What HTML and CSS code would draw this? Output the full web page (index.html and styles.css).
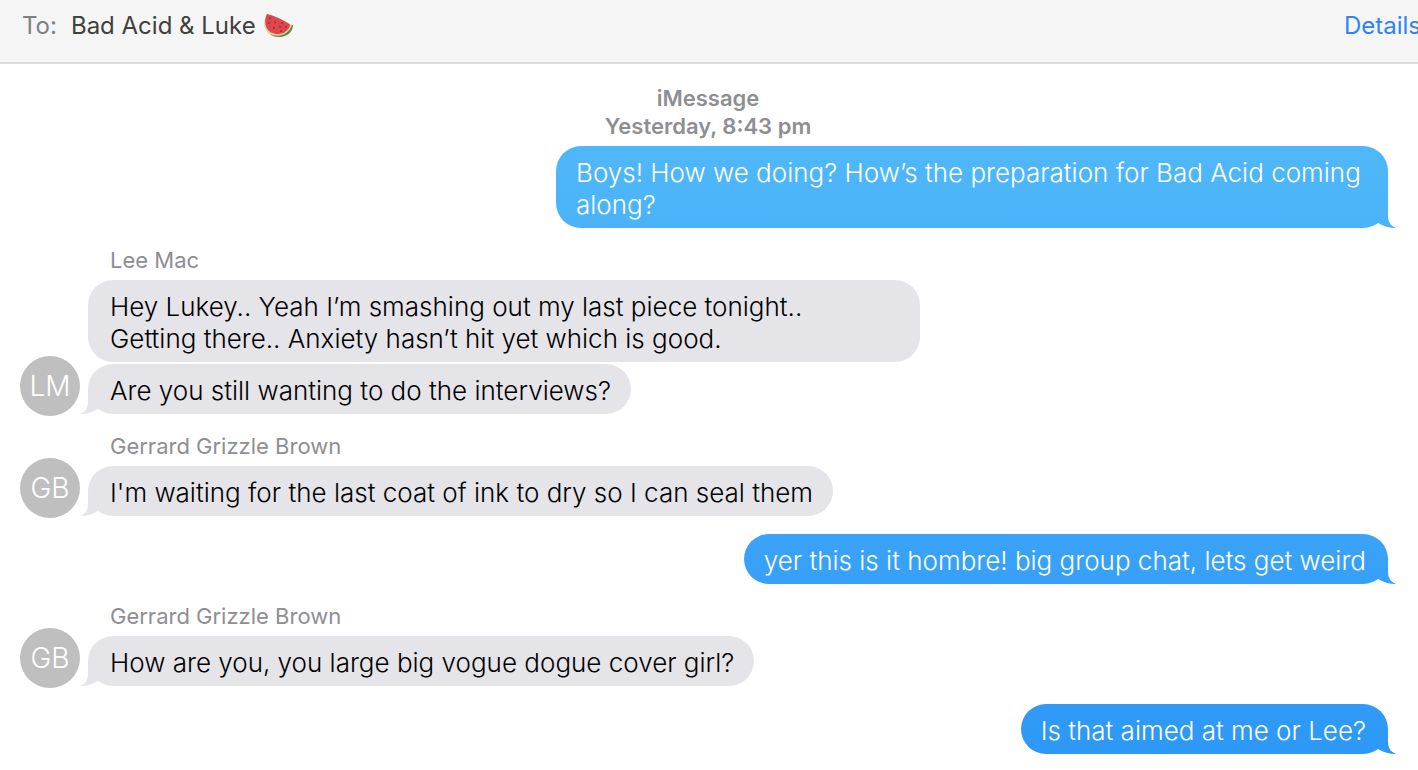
FILE: index.html
```
<!DOCTYPE html>
<html lang="en">
<head>
    <meta charset="utf-8">
    <title>Bad Acid &amp; Luke</title>
    <meta name="viewport" content="width=device-width, initial-scale=1.0">
    <link rel="stylesheet" href="styles.css">
</head>
<body>
    <header class="chat-header">
        <span class="to-label">To:</span>
        <h1 class="chat-name">Bad Acid &amp; Luke</h1>
        <svg class="melon" viewBox="0 0 30 26" role="img" aria-label="watermelon">
            <path d="M3 1 C-1 7 -1 15 4 20 C10 25 19 25 24 21 C28 18 29 15 29 12Z" fill="#ddd3a8"/>
            <path d="M29 12 C29 19 23 24 15 24 C11 24 8 23 5 20.500 C11 24 18 23 22 20 C25 18 27 15 28 12Z" fill="#5d8b35"/>
            <path d="M3 1 C0 7 1 14 5 18 C10 22 17 22 21 19 C24 17 26 14 26 11.500 Q15 4 3 1Z" fill="#e0444c"/>
            <g fill="#6a2028">
                <circle cx="6" cy="5" r=".8"/>
                <circle cx="5" cy="10" r=".8"/>
                <circle cx="11" cy="9" r=".8"/>
                <circle cx="18" cy="10" r=".8"/>
                <circle cx="10" cy="15" r=".8"/>
                <circle cx="16" cy="14" r=".8"/>
                <circle cx="17" cy="18" r=".8"/>
                <circle cx="22" cy="14" r=".8"/>
            </g>
        </svg>
        <button type="button" class="details">Details</button>
    </header>

    <main class="chat">
        <div class="timestamp">
            <div>iMessage</div>
            <div>Yesterday, 8:43 pm</div>
        </div>

        <div class="group sent">
            <p class="bubble tail">Boys! How we doing? How’s the preparation for Bad Acid coming along?</p>
        </div>

        <div class="group received">
            <div class="avatar">LM</div>
            <div class="messages">
                <div class="sender">Lee Mac</div>
                <p class="bubble">Hey Lukey.. Yeah I’m smashing out my last piece tonight.. <br>Getting there.. Anxiety hasn’t hit yet which is good.</p>
                <p class="bubble tail">Are you still wanting to do the interviews?</p>
            </div>
        </div>

        <div class="group received">
            <div class="avatar">GB</div>
            <div class="messages">
                <div class="sender">Gerrard Grizzle Brown</div>
                <p class="bubble tail">I'm waiting for the last coat of ink to dry so I can seal them</p>
            </div>
        </div>

        <div class="group sent">
            <p class="bubble tail">yer this is it hombre! big group chat, lets get weird</p>
        </div>

        <div class="group received">
            <div class="avatar">GB</div>
            <div class="messages">
                <div class="sender">Gerrard Grizzle Brown</div>
                <p class="bubble tail">How are you, you large big vogue dogue cover girl?</p>
            </div>
        </div>

        <div class="group sent">
            <p class="bubble tail">Is that aimed at me or Lee?</p>
        </div>
    </main>
</body>
</html>
```
FILE: styles.css
```
body {
    font-family: Inter, sans-serif;
    font-size: 26px;
    line-height: 32px;
    background-color: #ffffff;
    color: #000000;
    margin: 0;
}
.chat-header {
    display: flex;
    align-items: center;
    padding: 10px 0 20px 22px;
    background-color: #f5f5f5;
    border-bottom: 2px solid #dcdcdc;
    font-size: 24px;
    overflow: hidden;
}
.to-label {
    color: #808080;
    margin-right: 14px;
}
.chat-name {
    margin: 0;
    font-size: 24px;
    font-weight: normal;
    color: #404040;
}
.melon {
    width: 30px;
    height: 26px;
    margin-left: 8px;
}
/* runs off the right edge of the bar */
.details {
    margin: 0 -3px 0 auto;
    padding: 0;
    border: none;
    background: none;
    font: inherit;
    color: #2c84f5;
    cursor: pointer;
}
.chat {
    display: flex;
    flex-direction: column;
    gap: 18px;
    padding: 20px 30px 16px 20px;
}
.timestamp {
    margin: 0 -8px -12px 0;
    font-size: 22px;
    line-height: 28px;
    font-weight: 600;
    text-align: center;
    color: #8e8e93;
}
.group {
    display: flex;
    align-items: flex-end;
    gap: 8px;
}
.sent {
    justify-content: flex-end;
    padding-left: 68px;
}
.messages {
    flex: 1;
    display: flex;
    flex-direction: column;
    align-items: flex-start;
    gap: 2px;
}
.sender {
    margin: 0 0 4px 22px;
    font-size: 22px;
    line-height: 28px;
    color: #8e8e93;
}
.avatar {
    width: 60px;
    height: 60px;
    margin-bottom: -2px;
    border-radius: 50%;
    background-color: #bfbfbf;
    color: #ffffff;
    font-size: 28px;
    font-weight: 320;
    line-height: 60px;
    text-align: center;
}
.bubble {
    position: relative;
    box-sizing: border-box;
    max-width: 832px;
    margin: 0;
    padding: 11px 20px 7px 22px;
    border-radius: 25px;
    background-color: #e5e4e9;
    font-weight: 320;
}
.received .bubble:not(.tail) {
    width: 64%;
}
.sent .bubble {
    padding: 11px 22px 7px 20px;
    color: #ffffff;
    background: linear-gradient(#57bffa, #2d97f6) fixed;
}
.tail::after {
    content: "";
    position: absolute;
    bottom: 0;
    left: -8px;
    width: 24px;
    height: 25px;
    background: inherit;
    clip-path: path("M8 0 V13 Q8 22 0 25 Q10 25 18 20 L24 6 Z");
}
.sent .tail::after {
    left: auto;
    right: -8px;
    clip-path: path("M16 0 V13 Q16 22 24 25 Q14 25 6 20 L0 6 Z");
}
```
